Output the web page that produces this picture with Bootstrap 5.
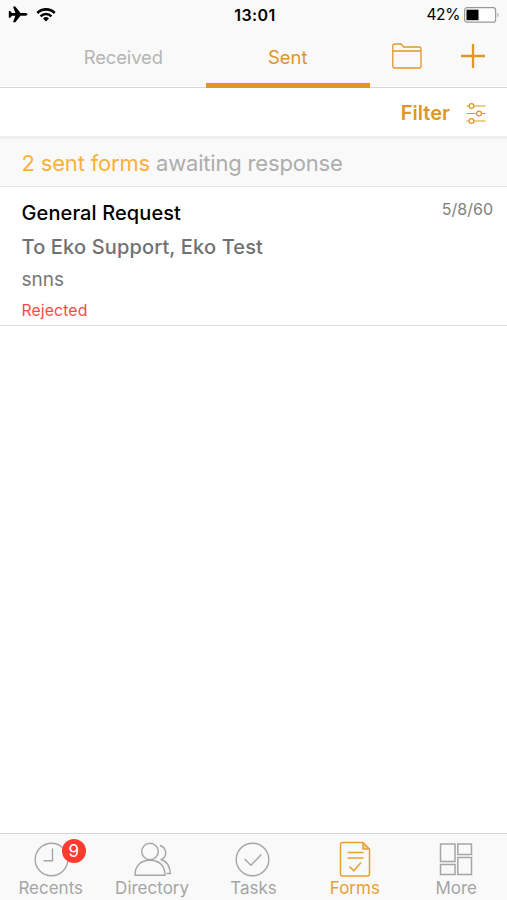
<!DOCTYPE html>
<html lang="en">
<head>
<meta charset="utf-8">
<meta name="viewport" content="width=device-width, initial-scale=1">
<title>Forms</title>
<link href="https://cdn.jsdelivr.net/npm/bootstrap@5.3.0/dist/css/bootstrap.min.css" rel="stylesheet">
<style>
body{font-family:Inter,"Liberation Sans",sans-serif;color:#000;background:#fff;height:900px;overflow:hidden;line-height:1.2}
svg{display:block;flex:none}
.gold{color:#df9627}
.top-area{background:#f9f9f9;height:88px;border-bottom:1px solid #d8d8d8}
.status-bar{height:30px;padding:0 7px 0 7px;display:grid;grid-template-columns:1fr auto 1fr;font-size:15.5px}
.clock{font-weight:600;letter-spacing:.4px;font-size:16px;padding-left:3px;padding-top:1px}
.level{letter-spacing:-.4px;padding-top:1px}
.top-tabs{height:58px;padding-left:41px;font-size:18px}
.btn.top-tab{flex:none;width:164.5px;height:58px;font-size:18.4px;border:0;border-bottom:5px solid transparent;color:#b5b5b5;padding:2px 0 0;border-radius:0;background:none}
.btn.top-tab.active{color:#df9627;border-color:#df9627}
.btn.top-tab:first-child{letter-spacing:-.1px}
.top-icon{width:66px;height:52px}
.filter-bar{height:51px;border-bottom:3px solid #efefef;padding:2px 21px 0 0;font-size:20px;font-weight:600}
.summary{height:48px;border-bottom:1px solid #e6e6e6;background:#f9f9f9;padding:1px 0 0 21.5px;font-size:22px;color:#adadad;letter-spacing:-.18px}
.summary b{font-weight:400;color:#fbb03b}
.form-item{height:139px;border:0;border-bottom:1px solid #dcdcdc;padding:14px 14px 0 21.5px}
.f-title{font-size:20px;font-weight:500;line-height:24px;letter-spacing:.1px}
.f-date{font-size:16px;color:#808080;line-height:16px}
.f-to{font-size:20px;font-weight:500;color:#717171;line-height:24px;margin-top:10px;letter-spacing:.15px}
.f-text{font-size:19px;color:#777;line-height:24px;margin-top:9px}
.f-state{font-size:15.8px;color:#fa4b42;line-height:20px;margin-top:9px;letter-spacing:.1px}
.bottom-nav{height:67px;background:#f9f9f9;border-top:1px solid #d2d2d2;color:#a5a5a5;font-size:17px}
.bottom-nav .tab{padding-top:7px;color:#a5a5a5;text-decoration:none}
.bottom-nav .tab.on{color:#e9a033}
.bottom-nav span.lbl{line-height:20px;margin-top:1px}
.count{left:29px;top:-2px;width:24px;height:24px;background:#ff3b30;color:#fff;font-size:17px;line-height:24px}
</style>
</head>
<body class="d-flex flex-column">
<header class="top-area">
  <div class="status-bar align-items-center">
    <div class="d-flex align-items-center gap-2">
      <svg width="21" height="20" viewBox="0 0 21 20"><path d="M20.500 9.400C20.500 8.500 18.600 8.100 17.500 8.100H13.500L8.300 1.500H6L8.400 8.100H5L3.200 6H1.800V12.800H3.200L5 10.700H8.400L6 17.300H8.300L13.500 10.700H17.500C18.600 10.700 20.500 10.300 20.500 9.400Z"/></svg>
      <svg width="20" height="16" viewBox="0 0 20 16"><g fill="none" stroke="#000" stroke-width="2.600"><path d="M1.300 6A12.300 12.300 0 0 1 18.700 6"/><path d="M4.600 9.300A7.600 7.600 0 0 1 15.400 9.300"/></g><path d="M10 14.500L7 11.500A4.300 4.300 0 0 1 13 11.500Z"/></svg>
    </div>
    <div class="clock">13:01</div>
    <div class="d-flex align-items-center justify-content-end gap-1">
      <span class="level">42%</span>
      <svg width="36" height="16" viewBox="0 0 36 16"><rect x=".6" y=".6" width="31" height="14.600" rx="2.500" fill="#fff" stroke="#999" stroke-width="1.200"/><rect x="2.500" y="2.700" width="12" height="10.500"/><path d="M33.500 5.500Q35.500 8 33.500 10.500Z" fill="#999"/></svg>
    </div>
  </div>
  <nav class="top-tabs d-flex">
    <button class="top-tab btn">Received</button>
    <button class="top-tab btn active">Sent</button>
    <div class="d-flex gold ps-1">
      <a class="top-icon gold d-flex align-items-center justify-content-center"><svg width="30" height="26" viewBox="0 0 30 26" fill="none" stroke="currentColor" stroke-width="1.300"><path d="M.8 8V3Q.8 1 2.800 1H8.500Q9.500 1 10 2L11.500 4H27Q29 4 29 6V23Q29 25 27 25H2.800Q.8 25 .8 23V8H29"/></svg></a>
      <a class="top-icon gold d-flex align-items-center justify-content-center"><svg width="24" height="24" viewBox="0 0 24 24" stroke="currentColor" stroke-width="2.300"><path d="M12 0V24M0 12H24"/></svg></a>
    </div>
  </nav>
</header>
<div class="filter-bar gold d-flex align-items-center justify-content-end gap-3">
  <span>Filter</span>
  <svg width="20" height="22" viewBox="0 0 20 22" fill="#fff" stroke="currentColor" stroke-width="1.200"><path d="M.5 4H19.500M.5 11.500H19.500M.5 19H19.500"/><circle cx="5.500" cy="4" r="2.400"/><circle cx="13" cy="11.500" r="2.400"/><circle cx="5.500" cy="19" r="2.400"/></svg>
</div>
<div class="summary d-flex align-items-center"><div><b>2 sent forms</b> awaiting response</div></div>
<main class="list-group list-group-flush flex-grow-1">
  <article class="form-item">
    <div class="d-flex justify-content-between"><div class="f-title">General Request</div><div class="f-date">5/8/60</div></div>
    <div class="f-to">To Eko Support, Eko Test</div>
    <div class="f-text">snns</div>
    <div class="f-state">Rejected</div>
  </article>
</main>
<nav class="bottom-nav row row-cols-5 g-0 text-center">
  <a class="tab d-flex flex-column align-items-center"><div class="position-relative">
    <svg width="36" height="36" viewBox="0 0 36 36" fill="none" stroke="currentColor" stroke-width="1.400"><circle cx="18.500" cy="18.500" r="16.300"/><path d="M19.500 7.500V19.800H10.500"/></svg>
    <span class="count position-absolute rounded-circle">9</span></div><span class="lbl">Recents</span></a>
  <a class="tab d-flex flex-column align-items-center">
    <svg width="38" height="36" viewBox="0 0 38 36" fill="none" stroke="currentColor" stroke-width="1.400"><circle cx="17" cy="10.500" r="8.300"/><path d="M2 34.300C2 25 7.500 19.300 17 19.300S32 25 32 34.300ZM27 4.500C34 6.500 34.500 15.500 28.500 18.500C34 20.500 37 25.500 37.300 32.500H33.500"/></svg><span class="lbl">Directory</span></a>
  <a class="tab d-flex flex-column align-items-center">
    <svg width="36" height="36" viewBox="0 0 36 36" fill="none" stroke="currentColor" stroke-width="1.400"><circle cx="17.500" cy="18.500" r="16.300"/><path d="M9.500 18L16 24.300L26.300 13.500"/></svg><span class="lbl">Tasks</span></a>
  <a class="tab on d-flex flex-column align-items-center">
    <svg width="32" height="36" viewBox="0 0 32 36" fill="none" stroke="currentColor" stroke-width="1.500"><path d="M24 1.500H3.500Q1.500 1.500 1.500 3.500V33Q1.500 35 3.500 35H28.500Q30.500 35 30.500 33V8ZM24 1.500V8H30.500M8.500 11.500H24.500M8.500 17H24.500M10.500 25.500L14.800 29.800L22 21.500"/><path d="M24 1.500V8H30.500Z" fill="currentColor" fill-opacity=".5" stroke="none"/></svg><span class="lbl">Forms</span></a>
  <a class="tab d-flex flex-column align-items-center">
    <svg width="34" height="36" viewBox="0 0 34 36" fill="none" stroke="currentColor" stroke-width="1.500"><path d="M1.500 3H16V20.500H1.500ZM18.800 3H32.500V13.500H18.800ZM1.500 23.500H16V33.500H1.500ZM18.800 16.500H32.500V33.500H18.800Z"/></svg><span class="lbl">More</span></a>
</nav>
<script src="https://cdn.jsdelivr.net/npm/bootstrap@5.3.0/dist/js/bootstrap.bundle.min.js"></script>
</body>
</html>
